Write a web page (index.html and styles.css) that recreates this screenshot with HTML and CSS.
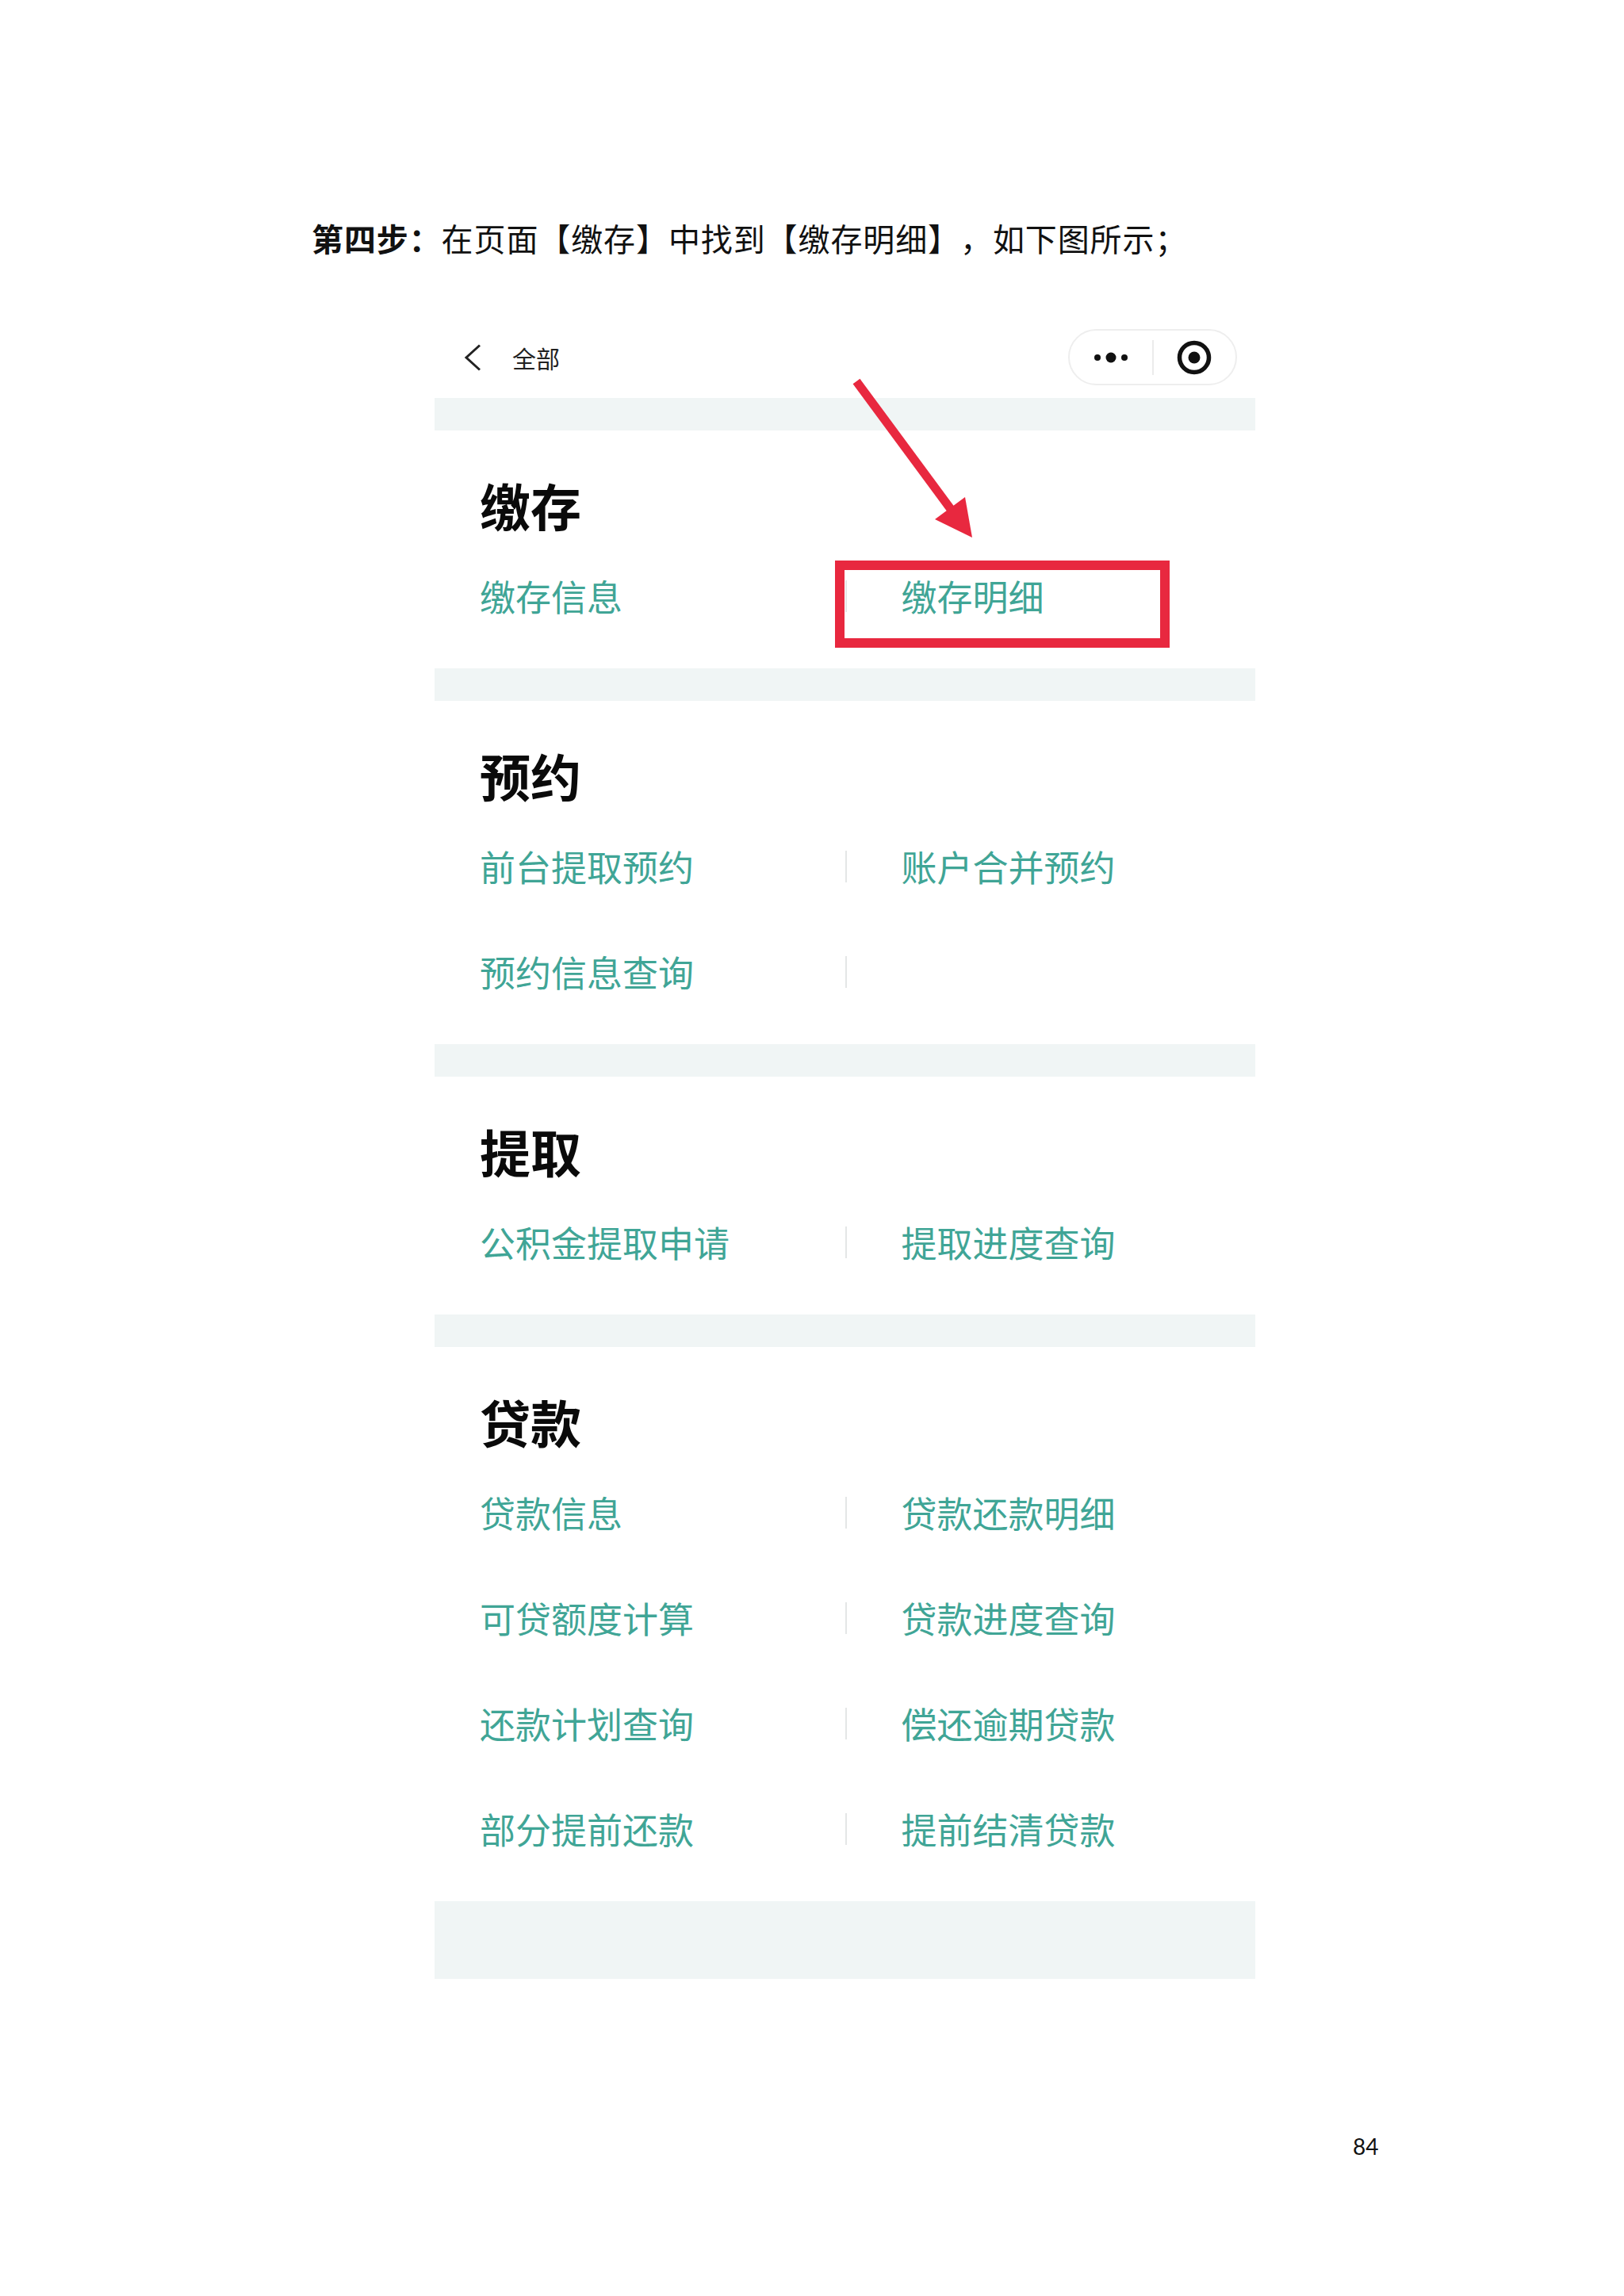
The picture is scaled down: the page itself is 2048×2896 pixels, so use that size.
FILE: index.html
```html
<!DOCTYPE html>
<html lang="zh-CN">
<head>
<meta charset="utf-8">
<title>第四步</title>
<link rel="stylesheet" href="styles.css">
</head>
<body>
<div class="page">
  <p class="step"><b>第四步：</b>在页面【缴存】中找到【缴存明细】，如下图所示；</p>

  <div class="phone">
    <div class="nav">
      <svg class="back" viewBox="0 0 22 34" width="22" height="34"><polyline points="20,1.5 3,17 20,32.5" fill="none" stroke="#222" stroke-width="3" stroke-linejoin="miter"/></svg>
      <span class="nav-title">全部</span>
      <div class="capsule">
        <span class="cap-half"><svg viewBox="0 0 44 14" width="44" height="14"><circle cx="5" cy="7" r="4" fill="#111"/><circle cx="22" cy="7" r="6.5" fill="#111"/><circle cx="39" cy="7" r="4" fill="#111"/></svg></span>
        <span class="cap-sep"></span>
        <span class="cap-half"><svg viewBox="0 0 46 46" width="46" height="46"><circle cx="23" cy="23" r="18.5" fill="none" stroke="#111" stroke-width="5.5"/><circle cx="23" cy="23" r="7.5" fill="#111"/></svg></span>
      </div>
    </div>

    <div class="gap"></div>
    <section class="group">
      <h2 class="group-title">缴存</h2>
      <div class="grid">
        <div class="cell cell-l">缴存信息</div>
        <div class="cell cell-r">缴存明细</div>
      </div>
    </section>

    <div class="gap"></div>
    <section class="group">
      <h2 class="group-title">预约</h2>
      <div class="grid">
        <div class="cell cell-l">前台提取预约</div>
        <div class="cell cell-r">账户合并预约</div>
        <div class="cell cell-l">预约信息查询</div>
        <div class="cell cell-r"></div>
      </div>
    </section>

    <div class="gap"></div>
    <section class="group">
      <h2 class="group-title">提取</h2>
      <div class="grid">
        <div class="cell cell-l">公积金提取申请</div>
        <div class="cell cell-r">提取进度查询</div>
      </div>
    </section>

    <div class="gap"></div>
    <section class="group">
      <h2 class="group-title">贷款</h2>
      <div class="grid">
        <div class="cell cell-l">贷款信息</div>
        <div class="cell cell-r">贷款还款明细</div>
        <div class="cell cell-l">可贷额度计算</div>
        <div class="cell cell-r">贷款进度查询</div>
        <div class="cell cell-l">还款计划查询</div>
        <div class="cell cell-r">偿还逾期贷款</div>
        <div class="cell cell-l">部分提前还款</div>
        <div class="cell cell-r">提前结清贷款</div>
      </div>
    </section>
    <div class="gap gap-end"></div>
  </div>

  <div class="pageno">84</div>

  <svg class="annot" viewBox="0 0 2048 900" width="2048" height="900">
    <line x1="1080" y1="481" x2="1204" y2="649" stroke="#e8283f" stroke-width="11"/>
    <polygon points="1226,678 1217,627 1179,655" fill="#e8283f"/>
    <rect x="1059" y="713" width="410" height="98" fill="none" stroke="#e8283f" stroke-width="12"/>
  </svg>
</div>
</body>
</html>
```

FILE: styles.css
```css
html, body {
  margin: 0;
  padding: 0;
  background: #ffffff;
}

.page {
  position: relative;
  width: 2048px;
  height: 2896px;
  font-family: "Noto Sans CJK SC", "Noto Sans", sans-serif;
  color: #111;
  text-spacing-trim: space-all;
}

.step {
  margin: 0;
  padding: 280px 0 0 393px;
  font-size: 40px;
  line-height: 40px;
  font-weight: 400;
  letter-spacing: 0.9px;
  color: #111;
  text-spacing-trim: space-all;
}

.step b {
  font-weight: 700;
}

.phone {
  margin: 79px 0 0 548px;
  width: 1035px;
}

.nav {
  height: 103px;
  display: flex;
  align-items: center;
  padding: 0 23px 0 37px;
}

.back {
  display: block;
  flex: none;
}

.nav-title {
  margin-left: 39px;
  font-size: 30px;
  line-height: 30px;
  color: #222;
}

.capsule {
  margin-left: auto;
  width: 213px;
  height: 71px;
  box-sizing: border-box;
  border: 2px solid #eeeeee;
  border-radius: 36px;
  display: flex;
  align-items: center;
}

.cap-half {
  flex: 1;
  display: flex;
  justify-content: center;
  align-items: center;
}

.cap-half svg {
  display: block;
}

.cap-sep {
  width: 2px;
  height: 44px;
  background: #ebebeb;
}

.gap {
  height: 41px;
  background: #f0f5f5;
}

.gap-end {
  height: 98px;
}

.group {
  padding: 61px 0 25px;
}

.group-title {
  margin: 0 0 0 57px;
  font-size: 64px;
  line-height: 64px;
  font-weight: 700;
  color: #0a0a0a;
}

.grid {
  margin-top: 17px;
  display: grid;
  grid-template-columns: 1fr 1fr;
}

.cell {
  height: 133px;
  display: flex;
  align-items: center;
  font-size: 45px;
  line-height: 45px;
  color: #40a596;
}

.cell-l {
  padding-left: 57px;
}

.cell-r::before {
  content: "";
  width: 2px;
  height: 40px;
  background: #e4e6e6;
  margin-right: 69px;
  flex: none;
}

.pageno {
  margin-top: 197px;
  padding-left: 1706px;
  font-family: Lato, "Liberation Sans", sans-serif;
  font-size: 28px;
  line-height: 28px;
  color: #111;
}

.annot {
  position: absolute;
  left: 0;
  top: 0;
  pointer-events: none;
}
```
